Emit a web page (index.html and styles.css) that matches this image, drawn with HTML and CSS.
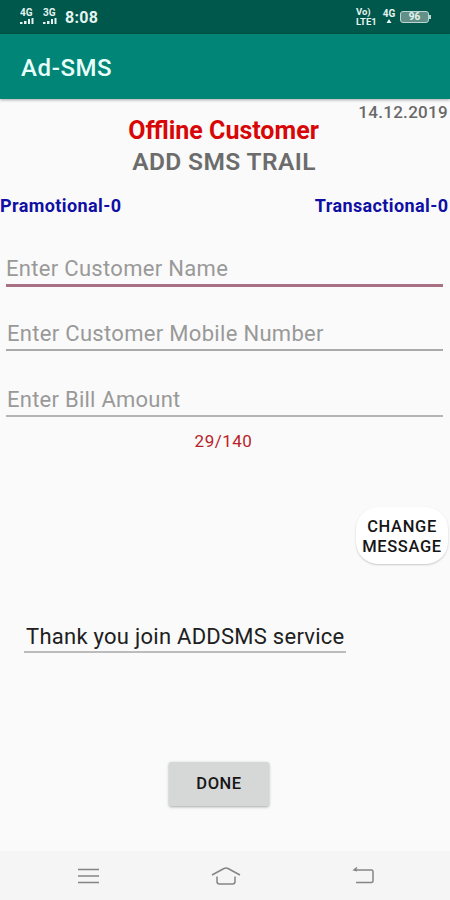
FILE: index.html
```html
<!DOCTYPE html>
<html lang="en">
<head>
<meta charset="utf-8">
<title>Ad-SMS</title>
<link rel="stylesheet" href="styles.css">
</head>
<body>
<header class="status">
  <div class="network"><span>4G</span><svg width="14" height="6" viewBox="0 0 14 6"><path d="M0 4h2.500v2H0zM4 3h2.500v3H4zM8 1h2v5H8zM11.5 0h2v6h-2z"/></svg></div>
  <div class="network second"><span>3G</span><svg width="14" height="6" viewBox="0 0 14 6"><path d="M0 4h2.500v2H0zM4 3h2.500v3H4zM8 1h2v5H8zM11.5 0h2v6h-2z"/></svg></div>
  <span class="clock">8:08</span>
  <div class="volte"><span>Vo)</span><span>LTE1</span></div>
  <div class="data"><span>4G</span><svg width="6" height="4" viewBox="0 0 6 4"><path d="M3 0l2.500 4h-5z"/></svg></div>
  <div class="battery"><span>96</span></div>
</header>
<div class="appbar"><h1>Ad-SMS</h1></div>
<main>
  <div class="date">14.12.2019</div>
  <h2 class="offline">Offline Customer</h2>
  <h3 class="trail">ADD SMS TRAIL</h3>
  <div class="counts"><span class="promo">Pramotional-0</span><span class="trans">Transactional-0</span></div>
  <div class="field active"><span class="name">Enter Customer Name</span></div>
  <div class="field mobile"><span>Enter Customer Mobile Number</span></div>
  <div class="field bill"><span>Enter Bill Amount</span></div>
  <div class="length">29/140</div>
  <button class="change">CHANGE<br>MESSAGE</button>
  <div class="message"><span>Thank you join ADDSMS service</span></div>
  <button class="done">DONE</button>
</main>
<nav>
  <svg width="24" height="20" viewBox="0 0 24 20"><path d="M2 3.500h21M2 10h21M2 16.500h21"/></svg>
  <svg width="30" height="20" viewBox="0 0 30 20"><path d="M1 9L13 2.500q2-1 4 0L29 9M6 10.500v5q0 2.500 2.500 2.500h13q2.500 0 2.500-2.500v-5"/></svg>
  <svg width="24" height="20" viewBox="0 0 24 20"><path d="M3 4h17.500q1.500 0 1.500 1.500v9.500q0 1.500-1.500 1.500H5M6 1.500L3 4l3 .8"/></svg>
</nav>
</body>
</html>
```
FILE: styles.css
```css
* { box-sizing: border-box; }
body { margin: 0; width: 450px; height: 900px; display: flex; flex-direction: column; overflow: hidden; background: #fafafa; font-family: Roboto, sans-serif; font-weight: 400; }
h1, h2, h3 { margin: 0; }
span { white-space: nowrap; }
.status { height: 34px; flex: none; display: flex; align-items: flex-start; background: #00574b; color: #e5f4f1; padding-left: 20px; font-weight: 700; }
.network { width: 14px; display: flex; flex-direction: column; padding-top: 9px; font-size: 10px; line-height: 8px; }
.network svg, .data svg { fill: currentColor; margin-top: 1px; }
.second { margin-left: 9px; }
.clock { margin-left: 8px; width: 40px; font-size: 16px; line-height: 20px; padding-top: 8px; letter-spacing: .3px; }
.volte { margin-left: 251px; width: 24px; display: flex; flex-direction: column; padding-top: 7px; font-size: 9.500px; line-height: 10px; }
.data { margin-left: 2px; width: 14px; display: flex; flex-direction: column; align-items: center; padding-top: 10px; font-size: 10px; line-height: 8px; }
.battery { position: relative; margin: 11px 0 0 4px; width: 29px; height: 12px; border: 1px solid #b9d6d1; border-radius: 3px; background: #628f87; font-size: 10px; line-height: 10px; text-align: center; }
.battery::after { content: ""; position: absolute; right: -3px; top: 3px; width: 2px; height: 4px; background: #b9d6d1; }
.appbar { height: 65px; flex: none; background: #008577; color: #e8fffb; padding: 21px 0 0 21px; box-shadow: 0 1px 3px #0005; z-index: 1; }
h1 { font-size: 24px; line-height: 27px; font-weight: 500; letter-spacing: .6px; }
main { height: 752px; flex: none; display: flex; flex-direction: column; }
.date { align-self: flex-end; margin: 3px 2px 0 0; height: 16px; font-size: 17px; line-height: 20px; font-weight: 500; color: #686868; letter-spacing: .3px; }
.offline { align-self: center; height: 28px; margin: -1px 3px 0 0; font-size: 25px; line-height: 28px; font-weight: 700; color: #d80707; }
.trail { align-self: center; margin: 3px 2px 0 0; font-size: 24.500px; line-height: 28px; font-weight: 600; color: #6c6c6c; letter-spacing: .4px; }
.counts { display: flex; justify-content: space-between; margin-top: 18px; padding: 0 1.500px 0 0; font-size: 18px; line-height: 24px; font-weight: 700; color: #0f0fa5; letter-spacing: .4px; }
.field { margin: 31px 7px 0 6px; border-bottom: 1px solid #999; font-size: 22px; line-height: 32px; color: #999; letter-spacing: .31px; }
.field.active { height: 34px; margin-top: 35px; border-bottom: 3px solid #a87085; }
.field.mobile { margin-top: 31px; height: 33px; border-bottom: 2px solid #aaa; padding-left: 1px; }
.field.bill { margin-top: 33px; height: 33px; border-bottom: 2px solid #b5b5b5; padding-left: 1px; letter-spacing: .25px; }
.length { align-self: center; margin: 14px 3px 0 0; font-size: 17px; line-height: 20px; color: #b82329; letter-spacing: .5px; }
button { border: 0; padding: 0; font: 500 16.500px/20px Roboto, sans-serif; color: #161616; letter-spacing: .65px; white-space: nowrap; }
.change { align-self: flex-end; width: 92px; height: 57px; margin: 56px 2px 0 0; padding-top: 2px; border-radius: 22px; background: #fff; box-shadow: 0 1px 2px #0003; }
.message { margin: 57px 0 0 24px; width: 322px; height: 32px; border-bottom: 2px solid #bcbcbc; padding-left: 2px; font-size: 22px; line-height: 32px; color: #202020; letter-spacing: .26px; }
.done { align-self: center; margin: 109px 12px 0 0; width: 100px; height: 44px; background: #d6d7d7; border-radius: 2px; box-shadow: 0 1px 3px #0005; letter-spacing: .55px; }
nav { height: 49px; flex: none; background: #f5f5f5; display: flex; justify-content: space-between; align-items: center; padding: 0 75px 0 76px; }
nav svg { fill: none; stroke: #858585; stroke-width: 1.500; }
```
